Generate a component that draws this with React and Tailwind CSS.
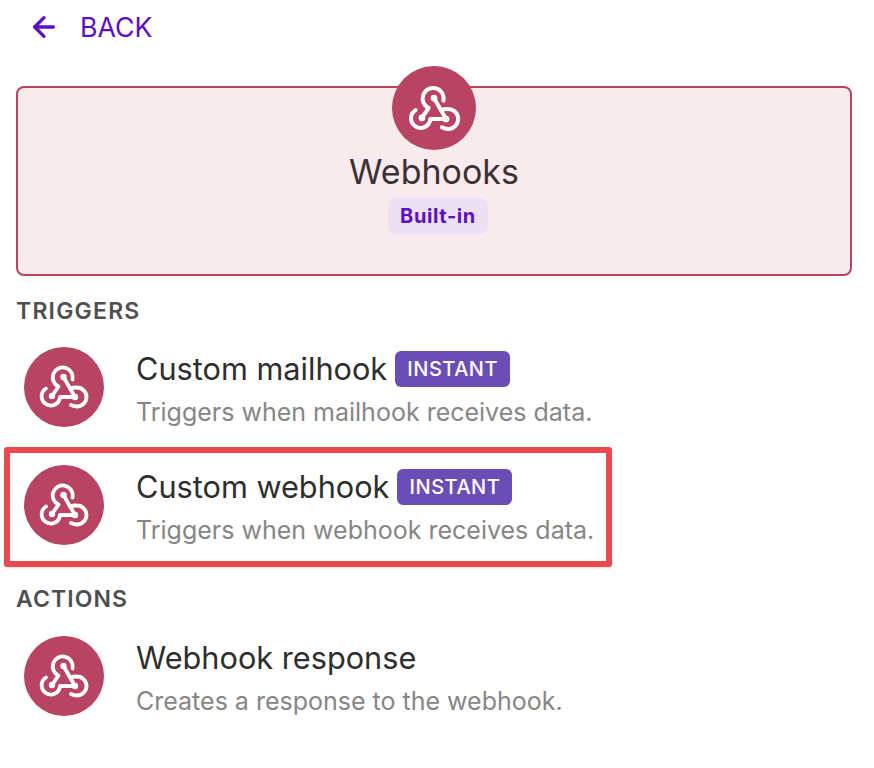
import { ArrowLeft } from "lucide-react";

function HookGlyph({ className }) {
  return (
    <svg className={className} viewBox="0 0 60 60" fill="none" stroke="currentColor" strokeWidth={3.8} strokeLinecap="round" strokeLinejoin="round">
      <path d="M18 39 L24.5 29.5 A10 10 0 1 1 38.5 22.5" />
      <path d="M29.5 20 L41 40" />
      <path d="M36 31.5 C38 30.8 40.5 30.4 43 30.5 A9.5 9.5 0 0 1 43 49.5 C41 49.5 39 49 37 48" />
      <path d="M41 40 H26 A9.2 9.2 0 1 1 12 31.5" />
      <circle cx="29.5" cy="20" r="3.2" fill="currentColor" stroke="none" />
      <circle cx="41" cy="40" r="3.2" fill="currentColor" stroke="none" />
      <circle cx="18" cy="39" r="3.2" fill="currentColor" stroke="none" />
    </svg>
  );
}

function HookIcon({ box, glyph }) {
  return (
    <div className={`flex shrink-0 items-center justify-center rounded-full bg-[#b84362] text-white ${box}`}>
      <HookGlyph className={glyph} />
    </div>
  );
}

function Row({ title, desc, instant, className = "" }) {
  return (
    <div className={`flex h-20 items-start pl-2 ${className}`}>
      <HookIcon box="w-20 h-20" glyph="w-[60px] h-[60px]" />
      <div className="ml-8 flex flex-col pt-1">
        <div className="flex h-9 items-center">
          <span className="text-[30.7px] leading-9 text-[#2e2e2e]">{title}</span>
          {instant && (
            <span className="ml-2 flex h-9 w-[115px] items-center justify-center rounded-md bg-[#6b4eb5] text-[20px] font-medium tracking-[0.5px] text-white">
              INSTANT
            </span>
          )}
        </div>
        <span className="mt-[9px] text-[25px] leading-8 text-[#868686]">{desc}</span>
      </div>
    </div>
  );
}

export default function App() {
  return (
    <div className="min-h-[768px] bg-white px-4 font-['Inter',sans-serif]">
      {/* Back link */}
      <div className="flex h-[54px] items-center pl-3 text-[#5c0fc4]">
        <ArrowLeft className="h-8 w-8" strokeWidth={2.5} />
        <span className="ml-[20px] text-[26.7px]">BACK</span>
      </div>

      {/* Header card */}
      <div className="mt-8 flex h-[190px] w-[836px] flex-col items-center rounded-lg border-2 border-[#b84362] bg-[#f7ebed]">
        <HookIcon box="w-[84px] h-[84px] -mt-[22px]" glyph="w-[63px] h-[63px]" />
        <h1 className="text-[34px] leading-11 text-[#3d3035]">Webhooks</h1>
        <span className="mt-[4px] ml-2 flex h-9 w-[100px] items-center justify-center rounded-lg bg-[#ebe0f4] text-[20px] font-bold tracking-[0.6px] text-[#5c0fc4]">
          Built-in
        </span>
      </div>

      <h2 className="mt-[21px] text-[23px] leading-7 font-semibold tracking-[1.2px] text-[#4f4f4f]">TRIGGERS</h2>
      <Row className="mt-[22px]" title="Custom mailhook" desc="Triggers when mailhook receives data." instant />

      <div className="relative mt-[38px]">
        <Row title="Custom webhook" desc="Triggers when webhook receives data." instant />
        {/* Red highlight drawn over the row */}
        <div className="absolute -top-[18px] -left-3 h-[120px] w-[608px] rounded-[3px] border-[6px] border-[#ea4a4f] shadow-sm" />
      </div>

      <h2 className="mt-[40px] text-[23px] leading-7 font-semibold tracking-[1.1px] text-[#4f4f4f]">ACTIONS</h2>
      <Row className="mt-[23px]" title="Webhook response" desc="Creates a response to the webhook." />
    </div>
  );
}
